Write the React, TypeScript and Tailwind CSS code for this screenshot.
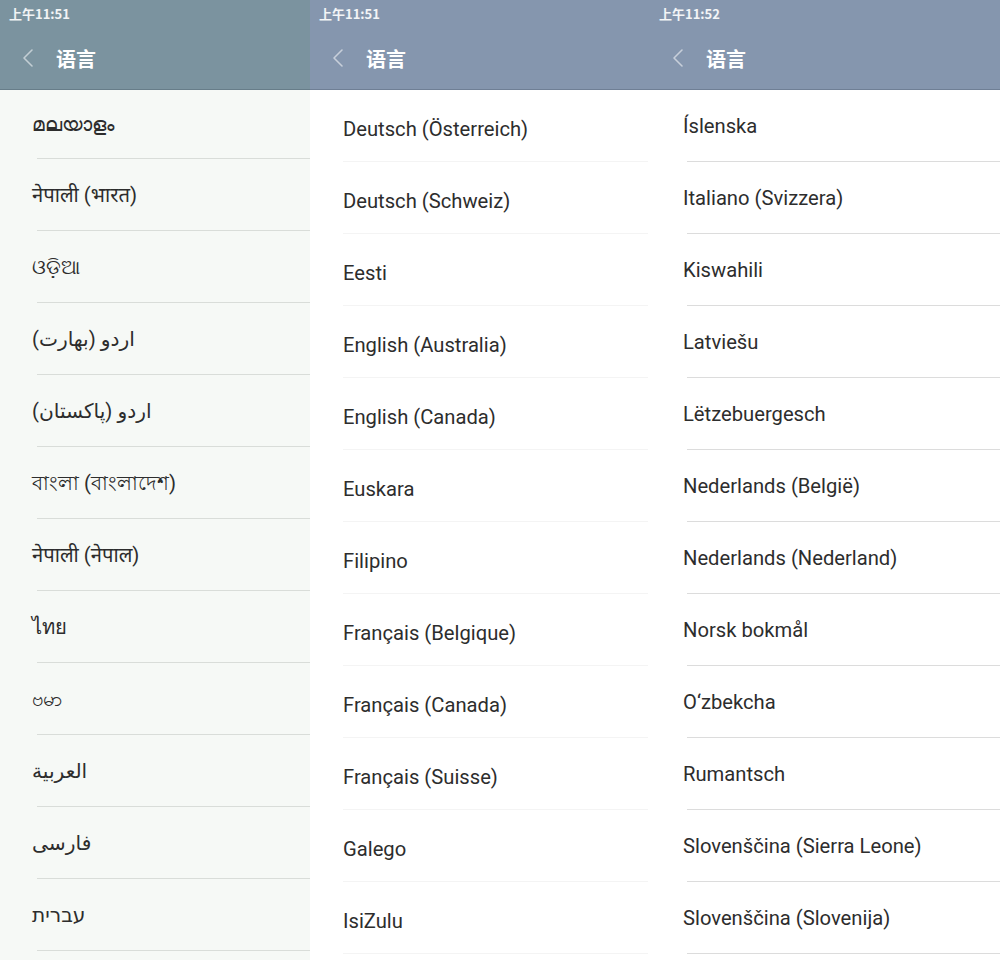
import React from 'react';

const panels = [
    {
        time: '上午11:51',
        width: 'w-[310px]',
        headerBg: 'bg-[#7b939f]',
        headerBorder: 'border-[#677d89]',
        listBg: 'bg-[#f6f9f6]',
        rowClass: 'first:h-[69px] h-[72px] pl-[32px]',
        lineClass: 'left-[37px] right-0 bg-[#d9ddd9]',
        textClass: 'font-normal',
        items: [
            'മലയാളം',
            'नेपाली (भारत)',
            'ଓଡ଼ିଆ',
            'اردو (بھارت)',
            'اردو (پاکستان)',
            'বাংলা (বাংলাদেশ)',
            'नेपाली (नेपाल)',
            'ไทย',
            'ဗမာ',
            'العربية',
            'فارسی',
            'עברית',
        ],
    },
    {
        time: '上午11:51',
        width: 'w-[340px]',
        headerBg: 'bg-[#8596ae]',
        headerBorder: 'border-[#6f7f95]',
        listBg: 'bg-white',
        rowClass: 'h-[72px] pl-[33px] pt-[6px]',
        lineClass: 'left-[33px] right-[2px] bg-[#f4f4f4]',
        textClass: '',
        items: [
            'Deutsch (Österreich)',
            'Deutsch (Schweiz)',
            'Eesti',
            'English (Australia)',
            'English (Canada)',
            'Euskara',
            'Filipino',
            'Français (Belgique)',
            'Français (Canada)',
            'Français (Suisse)',
            'Galego',
            'IsiZulu',
        ],
    },
    {
        time: '上午11:52',
        width: 'flex-1',
        headerBg: 'bg-[#8596ae]',
        headerBorder: 'border-[#6f7f95]',
        listBg: 'bg-white',
        rowClass: 'h-[72px] pl-[33px]',
        lineClass: 'left-[37px] right-0 bg-[#dcdcdc]',
        textClass: '',
        items: [
            'Íslenska',
            'Italiano (Svizzera)',
            'Kiswahili',
            'Latviešu',
            'Lëtzebuergesch',
            'Nederlands (België)',
            'Nederlands (Nederland)',
            'Norsk bokmål',
            'O‘zbekcha',
            'Rumantsch',
            'Slovenščina (Sierra Leone)',
            'Slovenščina (Slovenija)',
        ],
    },
];

const Header = ({ time, bg, border }) => (
    <div className={`h-[90px] ${bg} border-b ${border} flex flex-col`}>
        <div className="h-[28px] pl-[9px] flex items-center text-[13px] font-bold text-white/90 font-['Noto_Sans_CJK_SC',sans-serif]">
            {time}
        </div>
        <div className="flex-1 flex items-center pl-[22px]">
            <svg width="12" height="20" viewBox="0 0 12 20" className="mb-[1px]">
                <path d="M10 2 2 10l8 8" fill="none" stroke="rgba(255,255,255,0.55)" strokeWidth="1.6" strokeLinecap="round" strokeLinejoin="round" />
            </svg>
            <span className="ml-[22px] text-[20px] font-bold text-white font-['Noto_Sans_CJK_SC',sans-serif] leading-none">语言</span>
        </div>
    </div>
);

const Panel = ({ p }) => (
    <div className={`${p.width} h-full flex flex-col overflow-hidden`}>
        <Header time={p.time} bg={p.headerBg} border={p.headerBorder} />
        <div className={`flex-1 ${p.listBg} flex flex-col`}>
            {p.items.map((item) => (
                <div key={item} className={`${p.rowClass} relative shrink-0 flex items-center`}>
                    <span className={`text-[20.2px] text-[#2d2d2d] whitespace-nowrap font-['Roboto','Noto_Sans','DejaVu_Sans',sans-serif] ${p.textClass}`}>{item}</span>
                    <div className={`absolute bottom-0 h-px ${p.lineClass}`} />
                </div>
            ))}
        </div>
    </div>
);

export default function App() {
    return (
        <div className="w-[1000px] h-[960px] flex overflow-hidden bg-white">
            {panels.map((p, i) => (
                <Panel key={i} p={p} />
            ))}
        </div>
    );
}
